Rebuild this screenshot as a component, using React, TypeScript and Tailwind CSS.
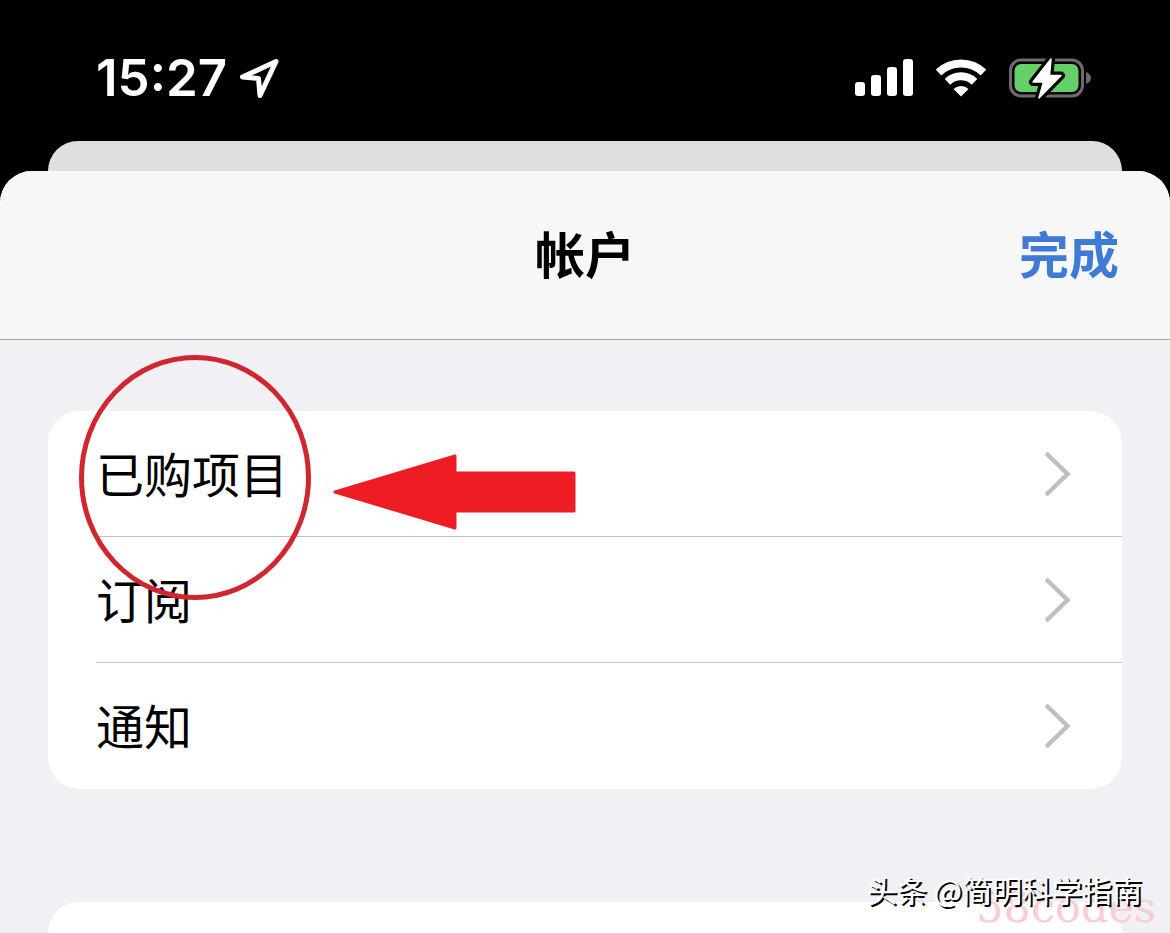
const items = ["已购项目", "订阅", "通知"]

function LocationIcon() {
  return (
    <svg width="42" height="42" viewBox="0 0 42 42" fill="none" aria-hidden="true">
      <path
        d="M37 4.500 3.500 20 19.500 21.500 21 38.500Z"
        stroke="white"
        strokeWidth="5"
        strokeLinejoin="round"
      />
    </svg>
  )
}

function SignalIcon() {
  return (
    <svg width="58" height="37" viewBox="0 0 58 37" fill="white" aria-hidden="true">
      <rect x="0" y="23" width="10" height="14" rx="3" />
      <rect x="16" y="16" width="10" height="21" rx="3" />
      <rect x="32" y="8" width="10" height="29" rx="3" />
      <rect x="48" y="0" width="10" height="37" rx="3" />
    </svg>
  )
}

function WifiIcon() {
  return (
    <svg width="52" height="38" viewBox="0 0 52 38" aria-hidden="true">
      <g fill="none" stroke="white" strokeWidth="8">
        <path d="M3.500 13.500A32.500 32.500 0 0 1 48.500 13.500" />
        <path d="M12.500 22.800A19.500 19.500 0 0 1 39.500 22.800" />
      </g>
      <path d="M18.500 30A11 11 0 0 1 33.500 30L26 37.500Z" fill="white" />
    </svg>
  )
}

function BatteryIcon() {
  return (
    <svg width="82" height="42" viewBox="0 0 82 42" aria-hidden="true">
      <rect x="1.500" y="3" width="72" height="36" rx="10.500" fill="none" stroke="#6f6a6d" strokeWidth="3" />
      <path d="M77 15c3 1 5 3.500 5 6s-2 5-5 6Z" fill="#6f6a6d" />
      <rect x="5.500" y="7" width="64" height="28" rx="6.500" fill="#65cf68" />
      <path
        d="M42 2 24 25H34.500L30 41 52 18.500H40.500Z"
        fill="black"
        stroke="black"
        strokeWidth="8"
        strokeLinejoin="round"
      />
      <path
        d="M42 2 24 25H34.500L30 41 52 18.500H40.500Z"
        fill="white"
        stroke="white"
        strokeWidth="1.500"
        strokeLinejoin="round"
      />
    </svg>
  )
}

function Chevron() {
  return (
    <svg width="26" height="44" viewBox="0 0 26 44" fill="none" aria-hidden="true">
      <path d="M2.500 2.500 22.500 22 2.500 41.500" stroke="#bfbfc1" strokeWidth="4.500" strokeLinecap="round" />
    </svg>
  )
}

function StatusBar() {
  return (
    <div className="flex h-[141px] items-center justify-between pr-[79px] pl-24 pt-3.5">
      <div className="flex items-center gap-3 text-white">
        <span className="font-['Inter'] text-[51px] leading-[60px] font-semibold">15:27</span>
        <LocationIcon />
      </div>
      <div className="flex items-center gap-[22px]">
        <SignalIcon />
        <WifiIcon />
        <BatteryIcon />
      </div>
    </div>
  )
}

export default function App() {
  return (
    <div className="relative flex min-h-screen flex-col overflow-hidden bg-black font-['Noto_Sans_CJK_SC',sans-serif] text-black">
      <StatusBar />
      <div className="mx-12 h-[30px] rounded-t-[32px] bg-[#dfdfdf]" />

      <main className="flex flex-1 flex-col overflow-hidden rounded-t-[32px] bg-[#f0f0f5]">
        <header className="grid h-[169px] grid-cols-3 items-center border-b border-[#a9a9ac] bg-[#f7f7f7] px-[51px] pb-1.5 text-[50px] leading-[60px] font-semibold">
          <h1 className="col-start-2 text-center">帐户</h1>
          <button className="justify-self-end text-[#3f7bd6]">完成</button>
        </header>

        <div className="flex flex-1 flex-col gap-[113px] px-12 pt-[71px]">
          <div className="relative">
            <ul className="rounded-[32px] bg-white pl-12">
              {items.map((item) => (
                <li key={item} className="h-[126px] border-b border-[#c3c3c6] last:border-b-0">
                  <button className="flex h-full w-full items-center justify-between pr-[51px] text-5xl">
                    <span className="pb-1">{item}</span>
                    <Chevron />
                  </button>
                </li>
              ))}
            </ul>
            {/* circle and arrow pointing at the first row */}
            <svg
              className="pointer-events-none absolute -top-14 left-[31px]"
              width="500"
              height="246"
              viewBox="0 0 500 246"
              aria-hidden="true"
            >
              <ellipse cx="116" cy="122.500" rx="113.500" ry="120" fill="none" stroke="#cf2630" strokeWidth="5" />
              <path
                d="M256 137 376 101V118H495V156H376V173Z"
                fill="#ee1c24"
                stroke="#ee1c24"
                strokeWidth="3"
                strokeLinejoin="round"
              />
            </svg>
          </div>
          <div className="flex-1 rounded-t-[32px] bg-white" />
        </div>
      </main>

      <p className="absolute right-3.5 bottom-0 font-['DejaVu_Serif',serif] text-[43px] leading-[52px] text-[#f9cdd1]">
        58codes
      </p>
      <p className="absolute right-7 bottom-[22px] text-[30px] leading-11 text-white [text-shadow:2px_2px_0_#000]">
        头条 @简明科学指南
      </p>
    </div>
  )
}
